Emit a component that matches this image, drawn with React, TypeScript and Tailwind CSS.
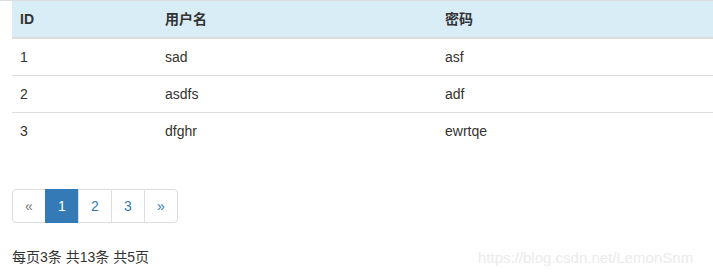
const rows = [
  { id: 1, name: 'sad', pwd: 'asf' },
  { id: 2, name: 'asdfs', pwd: 'adf' },
  { id: 3, name: 'dfghr', pwd: 'ewrtqe' },
];

const font = "font-['Liberation_Sans','Noto_Sans_CJK_SC',sans-serif]";

export default function App() {
  return (
    <div className={`relative h-[272px] w-[713px] overflow-hidden bg-white text-sm leading-5 text-[#333] ${font}`}>
      <div className="h-px w-full bg-[#ddd]" />
      <div className="pl-3">
        <table className="w-[701px] border-collapse">
          <thead>
            <tr className="bg-[#d9edf7]">
              <th className="w-[145px] border-b-2 border-[#ddd] p-2 text-left font-bold">ID</th>
              <th className="w-[280px] border-b-2 border-[#ddd] p-2 text-left font-bold">用户名</th>
              <th className="border-b-2 border-[#ddd] p-2 text-left font-bold">密码</th>
            </tr>
          </thead>
          <tbody>
            {rows.map((r, i) => (
              <tr key={r.id} className={i < rows.length - 1 ? 'border-b border-[#ddd]' : ''}>
                <td className="p-2">{r.id}</td>
                <td className="p-2">{r.name}</td>
                <td className="p-2">{r.pwd}</td>
              </tr>
            ))}
          </tbody>
        </table>

        <ul className="mt-10 flex w-fit">
          <li className="w-[34px] rounded-l border border-[#ddd] py-1.5 text-center text-[#777]">«</li>
          <li className="-ml-px w-[34px] border border-[#337ab7] bg-[#337ab7] py-1.5 text-center text-white">1</li>
          <li className="-ml-px w-[34px] border border-[#ddd] py-1.5 text-center text-[#337ab7]">2</li>
          <li className="-ml-px w-[34px] border border-[#ddd] py-1.5 text-center text-[#337ab7]">3</li>
          <li className="-ml-px w-[34px] rounded-r border border-[#ddd] py-1.5 text-center text-[#337ab7]">»</li>
        </ul>

        <p className="mt-6">每页3条 共13条 共5页</p>
      </div>

      <span className="absolute left-[478px] top-[248px] text-[15px] text-[#ebebeb]">
        https://blog.csdn.net/LemonSnm
      </span>
    </div>
  );
}
